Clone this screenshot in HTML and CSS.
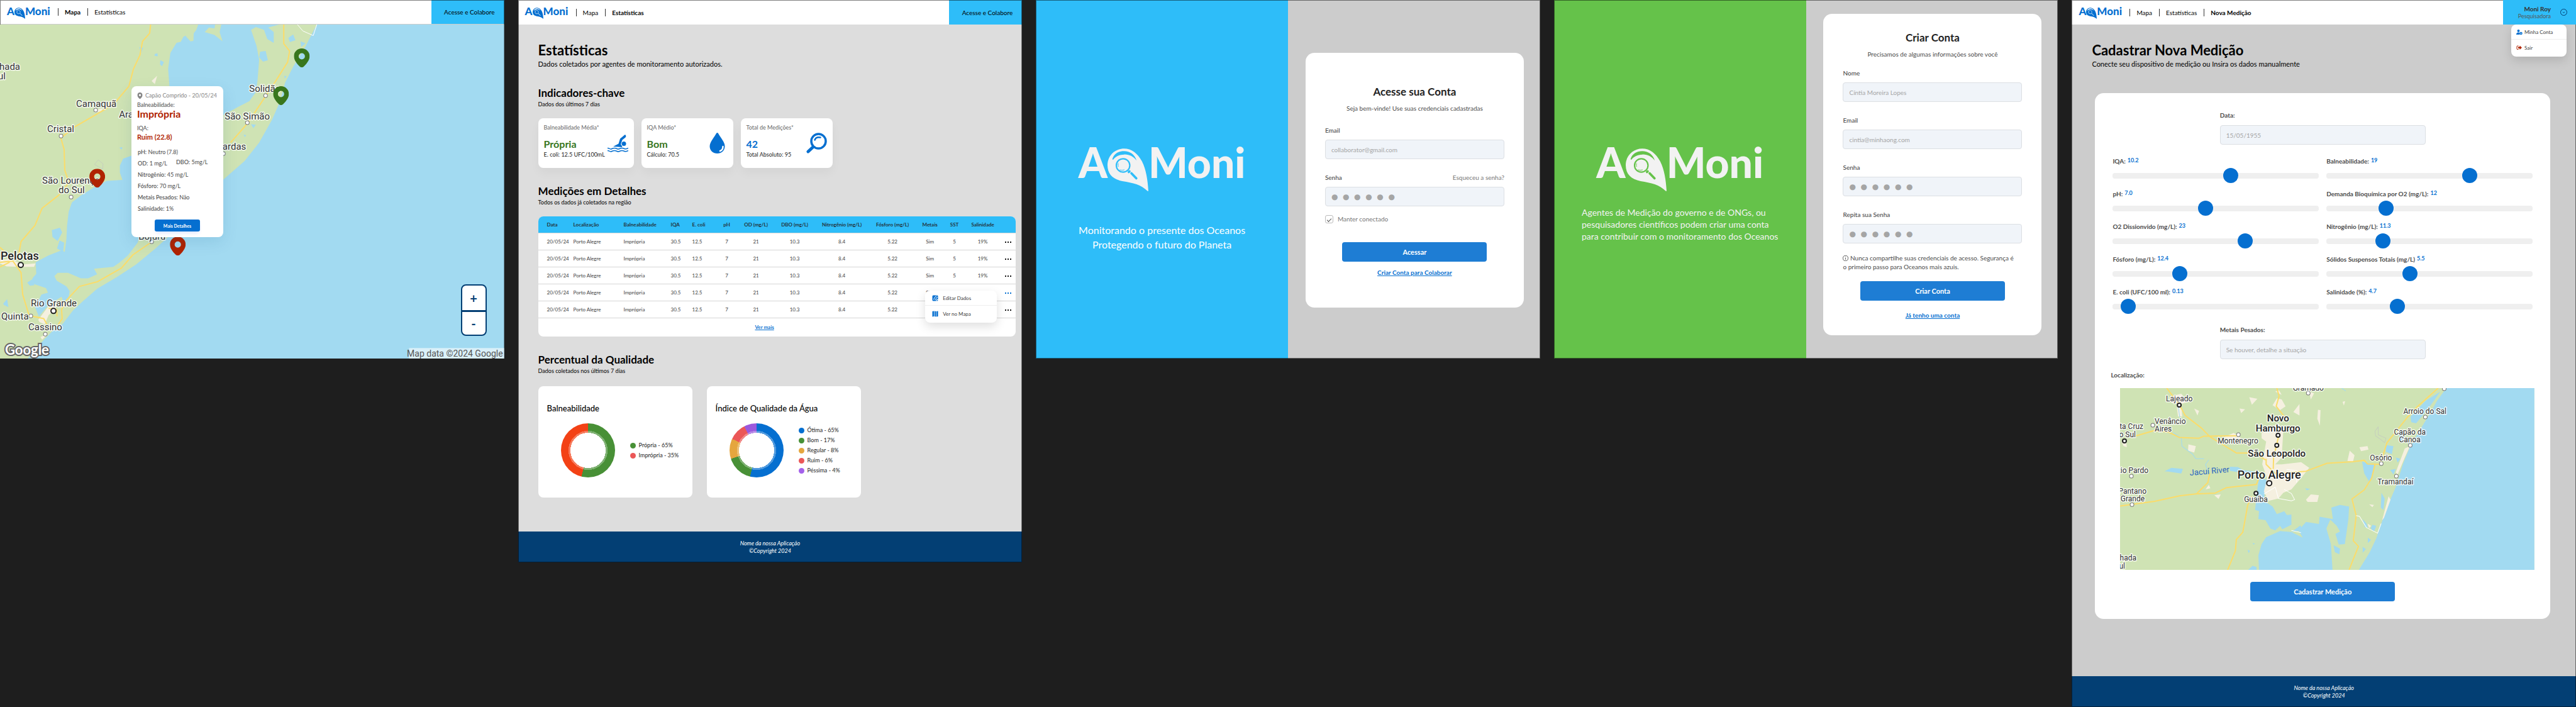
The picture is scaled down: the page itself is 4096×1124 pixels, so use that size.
FILE: index.html
```html
<!DOCTYPE html>
<html lang="pt-BR">
<head>
<meta charset="utf-8">
<title>AQMoni</title>
<link rel="stylesheet" href="styles.css">
</head>
<body>
<svg class="defs" aria-hidden="true">
  <symbol id="mark" viewBox="272 69 352 366">
    <path fill="currentColor" d="M415 69C480 69 535 112 570 182C604 250 618 335 624 435H617C565 380 490 363 400 349C320 335 272 290 272 212C272 130 335 69 415 69Z"/>
    <path class="logo-cut" d="M314 158C330 110 370 90 415 91C465 92 507 118 522 172C495 138 460 118 415 120C370 121 340 138 319 167Z"/>
    <circle class="logo-ring" cx="406" cy="214" r="58" stroke-width="12"/>
    <path class="logo-ring" stroke-width="5" d="M366 196Q360 212 366 226M377 252Q396 260 418 252"/>
    <path class="logo-ring" stroke-width="20" stroke-linecap="round" d="M455 271L461 265M478 282L520 325"/>
  </symbol>
  <symbol id="pin" viewBox="0 0 50 60">
    <path fill="currentColor" fill-rule="evenodd" d="M25 0C11 0 0 11 0 25C0 37 10 49 19 58Q25 62 31 58C40 49 50 37 50 25C50 11 39 0 25 0ZM25 15A10 10 0 1 1 25 35A10 10 0 1 1 25 15Z"/>
  </symbol>
</svg>

<div class="board">

  <section class="screen screen-wide map-screen">
    <header class="topbar topbar-line">
      <a class="logo" href="#inicio">A<svg class="mark"><use href="#mark"/></svg>Moni</a>
      <nav class="nav"><a class="current" href="#mapa">Mapa</a><a href="#estatisticas">Estatísticas</a></nav>
      <a class="access" href="#acesso">Acesse e Colabore</a>
    </header>
    <div class="map-area">
      <svg class="map" viewBox="0 0 801 531" preserveAspectRatio="xMinYMin slice">
        <rect class="water" width="801" height="531"/>
        <g transform="scale(.5147 .3656) translate(0 -107)">
          <path class="land" d="M0 107H558L566 125L582 131L578 152L566 160L558 182L545 186L526 230L519 300L523 374V676H407L380 690L370 720L370 750L378 782L330 786L290 815L250 850L222 880L212 920L207 980L205 1040L200 1095L190 1088L150 1110L110 1140L112 1190L100 1210L106 1235L142 1252L148 1272L128 1280L108 1335L120 1375L150 1325L190 1290L200 1330L190 1400L140 1470L100 1530L85 1560H0Z"/>
          <path class="land" d="M978 107L940 210L905 290L880 360L865 440L840 520L800 620L755 700L690 780L520 1029L480 1080L420 1150L360 1205L300 1255L255 1310L225 1350L195 1405L160 1440L140 1470L175 1400L198 1330L212 1290L215 1265L205 1245L175 1220L168 1200L178 1186L210 1186L250 1210L272 1210L300 1192L290 1168L350 1160L370 1140L395 1110L425 1055L430 1029L560 800L690 500L735 465L770 440L790 400L795 350L800 260L792 200L775 130L790 118L815 130L825 170L845 187L845 140L828 120L862 107Z"/>
          <path class="land" d="M556 107H612L606 130L598 145L597 178L588 180L575 160ZM632 140L645 120L662 124L664 107H683L678 140L687 180L662 152Z"/>
          <path class="water" d="M803 225L820 222L827 262L812 268L800 250ZM890 165L905 150L912 175L895 183ZM928 180L943 188L930 205ZM775 540L790 542L782 557ZM160 1000L185 990L192 1010L178 1048L162 1030ZM184 1045L198 1055L195 1096L176 1080ZM430 205L442 208L436 230ZM478 235L486 232L487 245L477 243ZM495 262L506 270L500 288L494 280ZM10 1320L22 1300L26 1335L12 1325ZM368 642L378 640L376 650ZM878 330L885 332L879 342ZM752 585L760 588L756 596ZM84 1228L104 1210L106 1240L92 1242Z"/>
          <path class="sand" d="M468 352L485 330L478 366ZM0 1130L30 1125L70 1150L110 1145L105 1160L60 1160L20 1158L0 1145ZM118 1390L150 1330L176 1325L170 1345L150 1370L138 1410L122 1400ZM125 1465L150 1450L130 1476ZM292 478L320 470L312 484L292 490Z"/>
          <path class="road" d="M465 107L462 145L440 180L432 240L412 300L398 375L360 438L325 475L230 552L188 600L198 650L200 740L212 790L200 820L180 850L130 905L108 980L65 1050L55 1130M0 1075L15 1095M0 1140L40 1135L65 1185L70 1280L90 1372L135 1385L145 1410M0 1160L30 1140M470 1050L410 1108L375 1165L300 1225L245 1245L205 1305L190 1345L192 1385L180 1410M876 107V190L894 222L888 270L850 355L820 418L765 535L712 620M150 1340L175 1345L176 1375"/>
          <path class="trail" d="M918 107L935 135L967 155L978 107"/>
          <path class="edge" d="M292 715L303 695L318 712L317 735L304 725Z"/>
        </g>
        <g class="towns">
          <circle cx="152" cy="136" r="3"/><circle cx="97" cy="177" r="3"/><circle cx="113" cy="274" r="3"/><circle cx="422" cy="113" r="3"/><circle cx="393" cy="156" r="3"/><circle cx="355" cy="205" r="3"/><circle cx="241" cy="345" r="3"/><circle cx="49" cy="463" r="3"/><circle cx="72" cy="492" r="3"/>
          <circle class="city" cx="33" cy="382" r="4"/><circle class="city" cx="85" cy="455" r="4"/>
        </g>
        <g class="labels labels-15">
          <text x="32" y="72" text-anchor="end">hada</text><text x="9" y="87" text-anchor="end">ul</text>
          <text x="121" y="131">Camaquã</text><text x="189" y="148">Arambaré</text><text x="75" y="171">Cristal</text>
          <text x="67" y="253">São Lourenço</text><text x="93" y="268">do Sul</text>
          <text x="396" y="107">Solidão</text><text x="357" y="151">São Simão</text><text x="391" y="199" text-anchor="end">Mostardas</text>
          <text x="220" y="342">Bojuru</text><text x="49" y="448">Rio Grande</text><text x="2" y="469">Quinta</text><text x="45" y="486">Cassino</text>
          <text class="strong" x="1" y="374">Pelotas</text>
        </g>
        <rect class="credit-box" x="650" y="514" width="151" height="17"/>
        <text class="google" x="8" y="525">Google</text>
        <text class="credit" x="799" y="528" text-anchor="end">Map data ©2024 Google</text>
        <g class="ok"><use href="#pin" x="467" y="38" width="25" height="30"/><use href="#pin" x="434" y="98" width="25" height="30"/></g>
        <g class="bad"><use href="#pin" x="142" y="229" width="25" height="30"/><use href="#pin" x="270" y="337" width="25" height="30"/></g>
      </svg>
      <article class="popup">
        <p class="place"><svg class="place-pin" viewBox="0 0 50 60"><use href="#pin"/></svg>Capão Comprido - 20/05/24</p>
        <p class="popup-label">Balneabilidade:</p>
        <p class="popup-big">Imprópria</p>
        <p class="popup-label">IQA:</p>
        <p class="popup-mid">Ruim (22.8)</p>
        <ul class="readings">
          <li><b>pH:</b> Neutro (7.8)</li>
          <li class="pair"><span><b>OD:</b> 1 mg/L</span><span class="second"><b>DBO:</b> 5mg/L</span></li>
          <li><b>Nitrogênio:</b> 45 mg/L</li>
          <li><b>Fósforo:</b> 70 mg/L</li>
          <li><b>Metais Pesados:</b> Não</li>
          <li><b>Salinidade:</b> 1%</li>
        </ul>
        <button class="details" type="button">Mais Detalhes</button>
      </article>
      <div class="zoom"><button type="button">+</button><button type="button">-</button></div>
    </div>
  </section>

  <section class="screen stats-screen">
    <header class="topbar">
      <a class="logo" href="#inicio">A<svg class="mark"><use href="#mark"/></svg>Moni</a>
      <nav class="nav"><a href="#mapa">Mapa</a><a class="current" href="#estatisticas">Estatísticas</a></nav>
      <a class="access" href="#acesso">Acesse e Colabore</a>
    </header>
    <main class="stats">
      <h1>Estatísticas</h1>
      <p class="lead">Dados coletados por agentes de monitoramento autorizados.</p>

      <h2>Indicadores-chave</h2>
      <p class="note">Dados dos últimos 7 dias</p>
      <div class="kpis">
        <article class="kpi">
          <div><p class="kpi-label">Balneabilidade Média*</p><p class="kpi-value green">Própria</p><p class="kpi-sub">E. coli: 12.5 UFC/100mL</p></div>
          <svg class="kpi-icon" viewBox="0 0 66 66"><g fill="currentColor"><path d="M52 9Q56 5 58 8Q60 12 57 15L47 23L42 37Q46 40 47 46L18 44L35 35L40 19Z"/><circle cx="52" cy="35" r="7"/></g><path fill="none" stroke="currentColor" stroke-width="3" d="M0 49Q4 49 7 51T14 51T22 49T30 51T38 51T46 49T54 51T66 49M0 57Q4 57 7 59T14 59T22 57T30 59T38 59T46 57T54 59T66 57"/></svg>
        </article>
        <article class="kpi">
          <div><p class="kpi-label">IQA Médio*</p><p class="kpi-value green">Bom</p><p class="kpi-sub">Cálculo: 70.5</p></div>
          <svg class="kpi-icon" viewBox="0 0 66 66"><path fill="currentColor" d="M30 2Q33 -2 36 2C42 14 57 29 57 43C57 57 46 66 33 66S9 57 9 43C9 29 24 14 30 2Z"/><path fill="none" stroke="#fff" stroke-width="5" stroke-linecap="round" d="M51 44Q51 55 42 58"/></svg>
        </article>
        <article class="kpi">
          <div><p class="kpi-label">Total de Medições*</p><p class="kpi-value blue">42</p><p class="kpi-sub">Total Absoluto: 95</p></div>
          <svg class="kpi-icon" viewBox="0 0 66 66"><g fill="none" stroke="currentColor" stroke-linecap="round"><circle cx="39" cy="27" r="23" stroke-width="7"/><path stroke-width="10" d="M21 46L6 60"/><path stroke-width="5" d="M27 23Q31 12 45 15"/></g></svg>
        </article>
      </div>

      <h2>Medições em Detalhes</h2>
      <p class="note">Todos os dados já coletados na região</p>
      <div class="table-card">
        <table>
          <colgroup><col class="c56"><col class="c80"><col class="c75"><col class="c34"><col class="c38"><col class="c34"><col class="c59"><col class="c64"><col class="c86"><col class="c75"><col class="c44"><col class="c34"><col class="c56"><col></colgroup>
          <thead><tr><th>Data</th><th>Localização</th><th>Balneabilidade</th><th>IQA</th><th>E. coli</th><th>pH</th><th>OD (mg/L)</th><th>DBO (mg/L)</th><th>Nitrogênio (mg/L)</th><th>Fósforo (mg/L)</th><th>Metais</th><th>SST</th><th>Salinidade</th><th></th></tr></thead>
          <tbody>
            <tr><td>20/05/24</td><td>Porto Alegre</td><td>Imprópria</td><td>30.5</td><td>12.5</td><td>7</td><td>21</td><td>10.3</td><td>8.4</td><td>5.22</td><td>Sim</td><td>5</td><td>19%</td><td><button class="more" type="button" aria-label="Opções"></button></td></tr>
            <tr><td>20/05/24</td><td>Porto Alegre</td><td>Imprópria</td><td>30.5</td><td>12.5</td><td>7</td><td>21</td><td>10.3</td><td>8.4</td><td>5.22</td><td>Sim</td><td>5</td><td>19%</td><td><button class="more" type="button" aria-label="Opções"></button></td></tr>
            <tr><td>20/05/24</td><td>Porto Alegre</td><td>Imprópria</td><td>30.5</td><td>12.5</td><td>7</td><td>21</td><td>10.3</td><td>8.4</td><td>5.22</td><td>Sim</td><td>5</td><td>19%</td><td><button class="more" type="button" aria-label="Opções"></button></td></tr>
            <tr><td>20/05/24</td><td>Porto Alegre</td><td>Imprópria</td><td>30.5</td><td>12.5</td><td>7</td><td>21</td><td>10.3</td><td>8.4</td><td>5.22</td><td>Sim</td><td></td><td></td><td><button class="more active" type="button" aria-label="Opções"></button></td></tr>
            <tr><td>20/05/24</td><td>Porto Alegre</td><td>Imprópria</td><td>30.5</td><td>12.5</td><td>7</td><td>21</td><td>10.3</td><td>8.4</td><td>5.22</td><td>Sim</td><td></td><td></td><td><button class="more" type="button" aria-label="Opções"></button></td></tr>
          </tbody>
        </table>
        <a class="see-more" href="#mais">Ver mais</a>
        <div class="menu row-menu">
          <button type="button"><svg class="menu-icon" viewBox="0 0 20 20"><rect x="1" y="1" width="18" height="18" rx="3" fill="#056fd0"/><path d="M5 15L7 10L14 2M9 16L17 6M14 20V15H20" fill="none" stroke="#fff" stroke-width="2"/></svg>Editar Dados</button>
          <button type="button"><svg class="menu-icon" viewBox="0 0 20 20"><path fill="#056fd0" d="M1 2L6 1V18L1 19ZM7.500 1L12.500 2V19L7.500 18ZM14 2L19 1V18L14 19Z"/></svg>Ver no Mapa</button>
        </div>
      </div>

      <h2>Percentual da Qualidade</h2>
      <p class="note">Dados coletados nos últimos 7 dias</p>
      <div class="charts">
        <article class="chart">
          <h3>Balneabilidade</h3>
          <div class="chart-body">
            <div class="donut donut-two"></div>
            <ul class="legend"><li class="l-green">Própria - 65%</li><li class="l-red">Imprópria - 35%</li></ul>
          </div>
        </article>
        <article class="chart">
          <h3>Índice de Qualidade da Água</h3>
          <div class="chart-body">
            <div class="donut donut-five"></div>
            <ul class="legend"><li class="l-blue">Ótima - 65%</li><li class="l-green">Bom - 17%</li><li class="l-amber">Regular - 8%</li><li class="l-red">Ruim - 6%</li><li class="l-purple">Péssima - 4%</li></ul>
          </div>
        </article>
      </div>
    </main>
    <footer class="footer"><p>Nome da nossa Aplicação</p><p>©Copyright 2024</p></footer>
  </section>

  <section class="screen screen-wide split">
    <div class="pane pane-blue">
      <div class="logo logo-big">A<svg class="mark"><use href="#mark"/></svg>Moni</div>
      <p class="tagline">Monitorando o presente dos Oceanos<br>Protegendo o futuro do Planeta</p>
    </div>
    <div class="pane-form">
      <form class="auth auth-login">
        <h2>Acesse sua Conta</h2>
        <p class="auth-sub">Seja bem-vinde! Use suas credenciais cadastradas</p>
        <div class="field"><div class="field-head"><label for="l-email">Email</label></div><input id="l-email" type="email" placeholder="collaborator@gmail.com"></div>
        <div class="field"><div class="field-head"><label for="l-senha">Senha</label><a href="#senha">Esqueceu a senha?</a></div><input class="secret" id="l-senha" type="password" placeholder="●&nbsp; ●&nbsp; ●&nbsp; ●&nbsp; ●&nbsp; ●"></div>
        <label class="keep"><input type="checkbox" checked>Manter conectado</label>
        <button class="primary" type="submit">Acessar</button>
        <a class="auth-link" href="#criar">Criar Conta para Colaborar</a>
      </form>
    </div>
  </section>

  <section class="screen screen-wide split">
    <div class="pane pane-green">
      <div class="logo logo-big">A<svg class="mark"><use href="#mark"/></svg>Moni</div>
      <p class="pitch">Agentes de Medição do governo e de ONGs, ou<br>pesquisadores científicos podem criar uma conta<br>para contribuir com o monitoramento dos Oceanos</p>
    </div>
    <div class="pane-form pane-top">
      <form class="auth auth-signup">
        <h2>Criar Conta</h2>
        <p class="auth-sub">Precisamos de algumas informações sobre você</p>
        <div class="field"><div class="field-head"><label for="c-nome">Nome</label></div><input id="c-nome" type="text" placeholder="Cíntia Moreira Lopes"></div>
        <div class="field"><div class="field-head"><label for="c-email">Email</label></div><input id="c-email" type="email" placeholder="cintia@minhaong.com"></div>
        <div class="field"><div class="field-head"><label for="c-senha">Senha</label></div><input class="secret" id="c-senha" type="password" placeholder="●&nbsp; ●&nbsp; ●&nbsp; ●&nbsp; ●&nbsp; ●"></div>
        <div class="field"><div class="field-head"><label for="c-senha2">Repita sua Senha</label></div><input class="secret" id="c-senha2" type="password" placeholder="●&nbsp; ●&nbsp; ●&nbsp; ●&nbsp; ●&nbsp; ●"></div>
        <p class="advice"><svg class="info" viewBox="0 0 20 20"><circle cx="10" cy="10" r="9"/><path d="M10 9V15M10 5V7"/></svg> Nunca compartilhe suas credenciais de acesso. Segurança é<br>o primeiro passo para Oceanos mais azuis.</p>
        <button class="primary" type="submit">Criar Conta</button>
        <a class="auth-link" href="#entrar">Já tenho uma conta</a>
      </form>
    </div>
  </section>

  <section class="screen record-screen">
    <header class="topbar">
      <a class="logo" href="#inicio">A<svg class="mark"><use href="#mark"/></svg>Moni</a>
      <nav class="nav"><a href="#mapa">Mapa</a><a href="#estatisticas">Estatísticas</a><a class="current" href="#nova">Nova Medição</a></nav>
      <div class="account">
        <p class="who"><strong>Moni Roy</strong><span>Pesquisadora</span></p>
        <button class="chevron" type="button" aria-label="Abrir menu"><svg viewBox="0 0 22 22"><circle cx="11" cy="11" r="10"/><path d="M8 10L11 13L14 10"/></svg></button>
        <div class="menu user-menu">
          <button type="button"><svg class="menu-icon" viewBox="0 0 20 20"><g fill="#056fd0"><circle cx="7" cy="6" r="4"/><path d="M0 18Q0 11 7 11Q10 11 11 13L11 18Z"/></g><circle cx="15" cy="14" r="3" fill="none" stroke="#056fd0" stroke-width="3"/></svg>Minha Conta</button>
          <button type="button"><svg class="menu-icon" viewBox="0 0 20 20"><path d="M7 4H4Q2 4 2 6V13Q2 15 4 15H7" fill="none" stroke="#b02300" stroke-width="2"/><path fill="#b02300" d="M6 7H11V3L18 9.500L11 16V12H6Z"/></svg>Sair</button>
        </div>
      </div>
    </header>
    <main class="record">
      <h1>Cadastrar Nova Medição</h1>
      <p class="lead">Conecte seu dispositivo de medição ou Insira os dados manualmente</p>
      <form class="record-card">
        <div class="field narrow"><div class="field-head"><label for="data">Data:</label></div><input id="data" type="text" placeholder="15/05/1955"></div>
        <div class="sliders">
          <div class="slider"><label for="s1">IQA: <output>10.2</output></label><input id="s1" type="range" max="1000" value="577"></div>
          <div class="slider"><label for="s2">Balneabilidade: <output>19</output></label><input id="s2" type="range" max="1000" value="709"></div>
          <div class="slider"><label for="s3">pH: <output>7.0</output></label><input id="s3" type="range" max="1000" value="448"></div>
          <div class="slider"><label for="s4">Demanda Bioquímica por O2 (mg/L): <output>12</output></label><input id="s4" type="range" max="1000" value="272"></div>
          <div class="slider"><label for="s5">O2 Dissionvido (mg/L): <output>23</output></label><input id="s5" type="range" max="1000" value="654"></div>
          <div class="slider"><label for="s6">Nitrogênio (mg/L): <output>11.3</output></label><input id="s6" type="range" max="1000" value="257"></div>
          <div class="slider"><label for="s7">Fósforo (mg/L): <output>12.4</output></label><input id="s7" type="range" max="1000" value="312"></div>
          <div class="slider"><label for="s8">Sólidos Suspensos Totais (mg/L) <output>5.5</output></label><input id="s8" type="range" max="1000" value="399"></div>
          <div class="slider"><label for="s9">E. coli (UFC/100 ml): <output>0.13</output></label><input id="s9" type="range" max="1000" value="43"></div>
          <div class="slider"><label for="s10">Salinidade (%): <output>4.7</output></label><input id="s10" type="range" max="1000" value="333"></div>
        </div>
        <div class="field narrow"><div class="field-head"><label for="metais">Metais Pesados:</label></div><input id="metais" type="text" placeholder="Se houver, detalhe a situação"></div>
        <p class="map-title">Localização:</p>
        <svg class="mini-map" viewBox="0 0 658 289" preserveAspectRatio="xMidYMid slice">
          <rect class="land" width="658" height="289"/>
          <g transform="scale(.5146 .3617) translate(-161 -165)">
            <path class="water" d="M1440 165H1168L1140 220L1112 290L1082 360L1054 430L1034 500L1012 600L985 690L965 770L952 825L932 885L898 964H1440Z"/>
            <path class="water" d="M590 964L588 900L598 850L612 820L655 793L690 797L725 822L712 790L735 753L775 762L777 730L818 740L813 690L840 678L868 685L866 740L860 800L855 850L836 852L826 805L840 795L830 770L810 742L798 782L812 850L817 964ZM690 797L718 768L724 790ZM590 560L582 640L578 700L590 705L588 740L610 745L625 782L640 790L655 770L662 785L690 765L690 720L676 722L668 706L645 718L632 685L605 660L608 620L622 570Z"/>
            <path class="water" d="M908 488L948 500L945 530L932 580L915 540ZM1058 290L1105 220L1150 180L1110 260L1075 320L1060 315ZM1020 352L1035 350L1040 400L1025 395ZM980 415L1005 420L1000 455L982 445ZM1050 405L1070 410L1055 435ZM1012 470L1026 475L1018 492ZM995 525L1012 520L1005 545ZM968 625L978 650L974 700L966 690ZM910 740L922 760L926 780L916 775ZM940 765L952 770L945 795L935 780ZM926 822L936 832L926 845ZM910 862L920 872L910 888ZM820 855L840 870L838 895L824 885ZM556 964L570 945L582 950L583 964ZM570 845L578 848L573 852ZM555 875L562 880L558 890ZM298 530L320 515L355 520L350 540L310 532ZM500 510L525 512L540 525L600 535L590 545L530 535L500 528ZM732 605L748 608L738 614Z"/>
            <path class="sand" d="M625 340L650 320L665 350L660 470L640 500L660 500L720 490L745 515L720 560L690 610L665 625L650 650L620 660L605 620L615 560L600 500L612 400L598 385V362ZM318 200L350 190L372 225L350 235L353 290L340 290L335 235L318 228ZM372 412L395 420L390 448L371 440ZM900 425L925 420L928 435L905 442ZM870 440L885 460L880 488L863 485ZM735 655L750 632L775 635L770 665L740 665ZM480 382L512 362L535 385L500 390ZM632 240L645 210L660 215L672 245L655 262ZM696 270L715 235L715 285ZM560 205L585 212L568 238ZM772 260L780 262L778 330L770 300ZM530 255L547 258L535 275ZM640 180L652 175L660 195ZM1040 430L1056 420L1040 470L1018 545L1012 535ZM990 640L996 655L976 735L970 745ZM435 590L440 605L425 610ZM452 635L472 632L465 652ZM390 255L405 265L400 285ZM848 225L856 222L852 242ZM745 180L760 188L750 215ZM165 400L180 395L182 425L172 420ZM930 675L945 678L940 688ZM925 760L936 770L930 780Z"/>
            <path class="stream" d="M385 455L395 475L420 475M435 480L425 500L435 545M340 240L345 290L355 310M350 385L325 360M845 165L858 178M350 380L352 420L385 455"/>
            <path class="road" d="M305 165L345 240L362 285L412 340L438 378L480 415L520 450H575L610 480M210 375L265 352L310 358L345 382L405 385L420 376L530 374M645 165L652 200L643 245L668 290M650 380L635 470L634 520M612 475L612 500L640 540L735 530L800 495L880 488L915 482L925 498L965 500M965 495L985 405L1050 290L1080 245L1143 165M438 540L432 580L398 628M161 683L268 662L345 638L395 630L455 626L490 602L582 588L590 560M568 640L555 680L540 798L520 830L517 880L493 964M948 500L938 560L915 612L877 652L890 725L881 835L897 860L880 920L868 964"/>
            <path class="trail" d="M890 725L900 728L922 778L956 802L967 760M605 630L640 600L650 650L690 660L700 655L690 628L668 610M675 522L708 528L706 580M690 790L720 800"/>
            <path class="edge" d="M948 355L958 335V370L982 385L978 405L965 390L950 375Z"/>
          </g>
          <g class="towns">
            <circle cx="299" cy="8" r="3"/><circle cx="52" cy="59" r="3"/><circle cx="188" cy="74" r="3"/><circle cx="485" cy="46" r="3"/><circle cx="461" cy="91" r="3"/><circle cx="415" cy="120" r="3"/><circle cx="439" cy="140" r="3"/><circle cx="18" cy="140" r="3"/><circle cx="19" cy="185" r="3"/><circle cx="515" cy="1" r="3"/>
            <circle class="city" cx="94" cy="27" r="3"/><circle class="city" cx="7" cy="84" r="3"/><circle class="city" cx="251" cy="75" r="3"/><circle class="city" cx="249" cy="91" r="3"/><circle class="city" cx="216" cy="167" r="3"/><circle class="city" cx="237" cy="151" r="4"/>
          </g>
          <g class="labels labels-12">
            <text x="73" y="21">Lajeado</text><text x="55" y="57">Venâncio</text><text x="55" y="69">Aires</text>
            <text x="37" y="65" text-anchor="end">nta Cruz</text><text x="25" y="78" text-anchor="end">do Sul</text>
            <text x="155" y="88">Montenegro</text><text x="299" y="4" text-anchor="middle">Gramado</text>
            <text x="450" y="41">Arroio do Sal</text><text x="435" y="74">Capão da</text><text x="443" y="86">Canoa</text>
            <text x="397" y="115">Osório</text><text x="409" y="153">Tramandaí</text><text x="197" y="181">Guaíba</text>
            <text x="45" y="135" text-anchor="end">Rio Pardo</text><text x="42" y="168" text-anchor="end">Pantano</text><text x="39" y="180" text-anchor="end">Grande</text>
            <text x="26" y="274" text-anchor="end">hada</text><text x="8" y="287" text-anchor="end">ul</text>
            <text class="river" x="111" y="139" transform="rotate(-5 111 139)">Jacuí River</text>
          </g>
          <g class="labels labels-15 medium">
            <text x="251" y="53" text-anchor="middle">Novo</text><text x="251" y="69" text-anchor="middle">Hamburgo</text><text x="249" y="109" text-anchor="middle">São Leopoldo</text>
            <text class="strong" x="237" y="144" text-anchor="middle">Porto Alegre</text>
          </g>
        </svg>
        <button class="primary" type="submit">Cadastrar Medição</button>
      </form>
    </main>
    <footer class="footer"><p>Nome da nossa Aplicação</p><p>©Copyright 2024</p></footer>
  </section>

</div>
</body>
</html>
```
FILE: styles.css
```css
* { box-sizing: border-box; margin: 0; padding: 0; }
body { background: #1e1e1e; font-family: Lato, "Open Sans", sans-serif; color: #000; }
a { color: inherit; text-decoration: none; }
ul { list-style: none; }
button, input { font: inherit; color: inherit; border: 0; background: none; }
button { cursor: pointer; }
.defs { position: absolute; width: 0; height: 0; }

.board { display: grid; grid-template-columns: repeat(5, 1fr); gap: 22px; align-items: start; }
.screen { display: flex; flex-direction: column; outline: 1px solid rgba(0, 0, 0, .5); outline-offset: -1px; }
.screen-wide { aspect-ratio: 1440 / 1024; }
.stats-screen { background: #ddd; }
.record-screen { background: #ccc; }

/* Logo */
.logo { display: flex; align-items: flex-start; flex: none; width: 67px; margin-right: 14px; color: #056fd0; font-size: 17px; font-weight: 900; line-height: 17px; }
.mark { flex: none; width: 17px; height: 18px; margin-top: 3px; }
.logo-big { width: auto; margin: 0; color: #f2f2f2; font-size: 66px; line-height: 66px; }
.logo-big .mark { width: 65px; height: 68px; margin-top: 11px; }
.logo-cut { fill: var(--logo-bg); }
.logo-ring { fill: none; stroke: var(--logo-bg); }

/* Top bar */
.topbar { display: flex; align-items: center; height: 39px; padding-left: 11px; background: #fff; --logo-bg: #fff; }
.topbar-line { border-bottom: 1px solid #ccc; }
.nav { display: flex; gap: 11px; flex: 1; font-size: 10px; line-height: 12px; }
.nav a { padding-left: 10px; border-left: 1px solid #333; }
.nav .current { font-weight: 700; }
.access { display: flex; align-items: center; justify-content: flex-end; align-self: stretch; width: 116px; padding-right: 15px; background: #2ebdf9; font-size: 10px; }
.account { position: relative; display: flex; align-items: center; justify-content: flex-end; gap: 15px; align-self: stretch; width: 116px; padding-right: 14px; background: #2ebdf9; }
.who { display: flex; flex-direction: column; align-items: flex-end; color: #333; font-size: 10px; line-height: 11px; }
.who span { color: #565656; font-size: 9px; }
.chevron { width: 11px; height: 11px; }
.chevron svg { display: block; fill: none; stroke: #033f74; stroke-width: 2; }

.menu { position: absolute; z-index: 1; background: #fff; border-radius: 8px; box-shadow: 0 6px 16px rgba(0, 0, 0, .13); font-size: 8px; color: #404040; }
.menu button { display: flex; align-items: center; width: 100%; height: 25px; padding-left: 11px; gap: 7px; }
.menu button:first-child { height: 24px; border-bottom: 1px solid #eee; }
.menu-icon { width: 10px; height: 10px; }
.row-menu { top: 118px; right: 30px; width: 114px; padding-bottom: 2px; }
.user-menu { top: 39px; right: 15px; width: 88px; padding-bottom: 2px; }
.user-menu button { padding-left: 8px; gap: 3px; }

/* Map */
.map-area { position: relative; flex: 1; min-height: 0; overflow: hidden; }
.map { display: block; width: 100%; height: 100%; }
.water { fill: #a2daf1; }
.land { fill: #cfe3b4; }
.sand { fill: #f5f0e0; }
.road, .trail, .edge, .stream { fill: none; stroke: #fbdc6a; stroke-width: 2px; vector-effect: non-scaling-stroke; stroke-linejoin: round; }
.trail { stroke: #fff; stroke-width: 1px; }
.edge { stroke: #c6cfbd; stroke-width: 1px; }
.stream { stroke: #a2daf1; stroke-width: 1px; }
.towns circle { fill: #fff; stroke: #777; stroke-width: 1px; }
.towns .city { stroke: #222; stroke-width: 2px; }
.labels { font-family: Roboto, sans-serif; fill: #333; stroke: #fff; stroke-width: 3px; stroke-opacity: .8; stroke-linejoin: round; paint-order: stroke; }
.labels-15 { font-size: 15px; }
.labels-12 { font-size: 12px; }
.medium { font-weight: 500; fill: #222; }
.labels .strong { font-size: 18px; font-weight: 500; fill: #222; }
.labels .river { fill: #2c67c0; font-size: 13px; stroke: none; }
.google { font-size: 22px; font-weight: 700; fill: #fff; stroke: #666; stroke-width: 4px; paint-order: stroke; }
.credit { font: 14px Roboto, sans-serif; fill: #555; }
.credit-box { fill: #fff; fill-opacity: .6; }
.ok { color: #38761d; }
.bad { color: #b02300; }

.popup { position: absolute; left: 209px; top: 98px; width: 146px; padding: 8px 9px 9px; background: #fff; border-radius: 8px; box-shadow: 0 8px 24px rgba(0, 80, 140, .12); color: #4b4b4b; font-size: 9px; }
.place { display: flex; align-items: center; gap: 4px; line-height: 13px; color: #868686; white-space: nowrap; }
.place-pin { width: 9px; height: 10px; }
.popup-label { margin-top: 3px; line-height: 12px; }
.popup-big { font-size: 16px; font-weight: 700; line-height: 16px; color: #b02300; }
.popup-big + .popup-label { margin-top: 9px; }
.popup-mid { font-size: 11px; font-weight: 700; line-height: 15px; color: #b02300; }
.readings { margin-top: 8px; padding-left: 1px; line-height: 18px; }
.readings b { font-weight: 500; }
.pair { display: flex; gap: 14px; }
.second { line-height: 14px; }
.details { display: block; width: 72px; height: 19px; margin: 8px auto 0; background: #056fd0; border-radius: 3px; color: #fff; font-size: 7px; font-weight: 700; box-shadow: 0 4px 6px -2px rgba(5, 60, 230, .15); }
.zoom { position: absolute; right: 28px; bottom: 36px; width: 41px; border: 2px solid #033f74; border-radius: 8px; background: #fff; overflow: hidden; color: #033f74; }
.zoom button { display: block; width: 100%; height: 39px; font-size: 20px; font-weight: 700; }
.zoom button + button { border-top: 3px solid #033f74; }

/* Page text */
h1 { font-size: 22px; line-height: 26px; }
.lead { font-size: 11px; line-height: 18px; }
.stats { padding: 28px 10px 54px 32px; }
.stats h2 { margin-top: 26px; font-size: 17px; line-height: 22px; }
.note { font-size: 9px; line-height: 14px; }

.kpis { display: grid; grid-template-columns: 152px 146px 146px; gap: 12px; margin-top: 15px; }
.kpi { display: flex; align-items: center; justify-content: space-between; padding: 0 9px; background: #fff; border-radius: 8px; box-shadow: 0 8px 16px rgba(0, 0, 0, .04); font-size: 9px; }
.kpi > div { padding: 9px 0 14px; white-space: nowrap; }
.kpi-label { color: #666; line-height: 12px; }
.kpi-value { margin-top: 10px; font-size: 16px; font-weight: 700; line-height: 20px; }
.kpi-sub { line-height: 14px; color: #222; }
.kpi-icon { flex: none; width: 33px; height: 33px; color: #056fd0; }
.green { color: #38761d; }
.blue { color: #056fd0; }

.table-card { position: relative; margin-top: 15px; background: #fff; border-radius: 8px; font-size: 8px; color: #404040; }
table { width: 100%; table-layout: fixed; border-collapse: separate; border-spacing: 0; }
.c34 { width: 34px; } .c38 { width: 38px; } .c44 { width: 44px; } .c56 { width: 56px; } .c59 { width: 59px; }
.c64 { width: 64px; } .c75 { width: 75px; } .c80 { width: 80px; } .c86 { width: 86px; }
th, td { height: 27px; text-align: left; white-space: nowrap; border-bottom: 1px solid #d6d6d6; }
th { background: #2ebdf9; color: #24343c; }
th:first-child { border-top-left-radius: 8px; }
th:last-child { border-top-right-radius: 8px; }
th:first-child, td:first-child { padding-left: 14px; }
th:nth-child(n+6), td:nth-child(n+6) { text-align: center; }
.more { display: inline-block; width: 10px; height: 2px; vertical-align: middle; background: linear-gradient(90deg, #111 2px, transparent 2px 4px, #111 4px 6px, transparent 6px 8px, #111 8px); }
.more.active { background: linear-gradient(90deg, #056fd0 2px, transparent 2px 4px, #056fd0 4px 6px, transparent 6px 8px, #056fd0 8px); }
.see-more { display: block; width: 72px; margin-left: 324px; line-height: 29px; text-align: center; color: #056fd0; font-weight: 700; text-decoration: underline; }

.charts { display: flex; gap: 23px; margin-top: 17px; }
.chart { width: 245px; height: 177px; padding: 26px 14px 0; background: #fff; border-radius: 8px; }
.chart h3 { font-size: 13px; font-weight: 500; line-height: 18px; }
.chart-body { display: flex; align-items: center; gap: 24px; margin: 15px 0 0 22px; }
.donut { width: 86px; height: 86px; border-radius: 50%; }
.donut-two { background: radial-gradient(circle, #fff 28px, rgba(255, 255, 255, .3) 28px 31px, transparent 31px), conic-gradient(#489036 194deg, #f34115 194deg); }
.donut-five { background: radial-gradient(circle, #fff 28px, rgba(255, 255, 255, .3) 28px 31px, transparent 31px), conic-gradient(#056fd0 194deg, #489036 194deg 252deg, #e5a63e 252deg 295deg, #eb5757 295deg 333deg, #9b59dd 333deg); }
.legend { font-size: 9px; line-height: 16px; white-space: nowrap; color: #222; }
.legend li { display: flex; align-items: center; gap: 5px; }
.legend li::before { content: ""; width: 9px; height: 9px; border-radius: 50%; }
.legend .l-green::before { background: #489036; }
.legend .l-red::before { background: #eb5757; }
.legend .l-blue::before { background: #056fd0; }
.legend .l-amber::before { background: #e5a63e; }
.legend .l-purple::before { background: #a461ea; }

.footer { padding: 13px 0 12px; background: #033f74; color: #fff; font-size: 9px; font-style: italic; line-height: 12px; text-align: center; }

/* Sign in and sign up */
.split { display: grid; grid-template-columns: 1fr 1fr; }
.pane { display: flex; flex-direction: column; align-items: center; padding-top: 225px; color: #fff; }
.pane-blue { background: #2ebdf9; --logo-bg: #2ebdf9; }
.pane-green { background: #65c24a; --logo-bg: #65c24a; }
.tagline { margin-top: 50px; font-size: 16px; line-height: 23px; text-align: center; }
.pitch { margin-top: 24px; font-size: 14px; line-height: 19px; color: #f2f2f2; }
.pane-form { display: flex; justify-content: center; align-items: center; padding-top: 3px; padding-left: 2px; background: #ccc; }
.pane-top { align-items: flex-start; padding-top: 22px; }
.auth { display: flex; flex-direction: column; width: 347px; padding: 50px 31px 49px; background: #fff; border-radius: 14px; font-size: 10px; color: #4b4b4b; }
.auth-signup { padding: 26px 31px 25px; }
.auth h2 { font-size: 17px; line-height: 24px; color: #222; text-align: center; }
.auth-sub { margin: 7px 0 20px; line-height: 15px; text-align: center; }
.auth-signup .auth-sub { margin-bottom: 15px; }
.field-head { display: flex; justify-content: space-between; margin-bottom: 8px; line-height: 14px; }
.field-head label { font-weight: 500; }
.field-head a { color: #777; }
.field input { display: block; width: 100%; height: 31px; padding: 0 9px; background: #f0f4f9; border: 1px solid #dcdfe3; border-radius: 4px; font-size: 10px; }
.field input::placeholder { color: #a5a5a5; opacity: 1; }
.field .secret { font-family: "DejaVu Sans", sans-serif; font-size: 12px; }
.auth .field + .field { margin-top: 22px; }
.keep { display: flex; align-items: center; gap: 7px; margin-top: 14px; line-height: 13px; color: #777; }
.keep input { display: grid; place-items: center; width: 13px; height: 13px; appearance: none; border: 1px solid #bbb; border-radius: 3px; }
.keep input:checked::before { content: ""; width: 6px; height: 3px; border: solid #555; border-width: 0 0 1px 1px; transform: rotate(-45deg); }
.primary { display: block; width: 230px; height: 31px; margin: 30px auto 0; background: #1e7dd4; border-radius: 4px; color: #fff; font-size: 11px; font-weight: 700; }
.auth-link { margin: 10px auto 0; line-height: 14px; color: #056fd0; font-weight: 700; text-decoration: underline; }
.advice { margin-top: 16px; line-height: 14px; white-space: nowrap; }
.info { width: 9px; height: 9px; vertical-align: -1px; fill: none; stroke: #4b4b4b; stroke-width: 2; }
.auth-signup .primary, .auth-signup .auth-link { margin-top: 16px; }

/* New measurement */
.record { padding: 28px 41px 91px 32px; }
.record-card { margin: 37px 0 0 5px; padding: 28px 25px; background: #fff; border-radius: 14px; color: #4b4b4b; font-size: 10px; }
.narrow { width: 327px; margin: 0 auto; }
.record-card .field-head { line-height: 15px; }
.record-card .field-head label, .map-title, .slider label { font-weight: 700; }
.sliders { display: grid; grid-template-columns: 1fr 1fr; gap: 10px 12px; margin: 19px 0 18px; padding: 0 3px; }
.slider label { display: flex; align-items: center; gap: 3px; height: 14px; margin-bottom: 4px; line-height: 14px; white-space: nowrap; }
.slider output { margin-bottom: 2px; color: #056fd0; font-size: 9px; line-height: 12px; }
.slider input { display: block; width: 100%; height: 24px; appearance: none; }
.slider input::-webkit-slider-runnable-track { height: 9px; border-radius: 4px; background: #efefef; }
.slider input::-webkit-slider-thumb { width: 24px; height: 24px; margin-top: -8px; appearance: none; border-radius: 50%; background: #056fd0; }
.map-title { margin-top: 18px; line-height: 15px; }
.mini-map { display: block; width: calc(100% - 15px); margin: 13px 0 0 15px; }
.record-card .primary { margin-top: 19px; }
```
